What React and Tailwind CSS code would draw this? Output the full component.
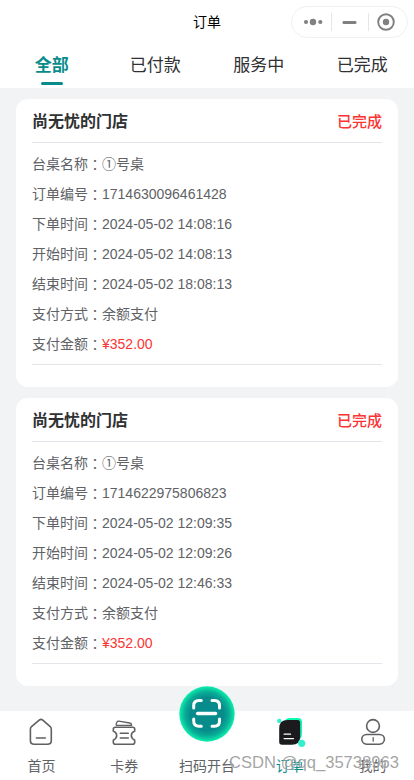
import React from "react";

const tabs = ["全部", "已付款", "服务中", "已完成"];

const orders = [
  { no: "1714630096461428", placed: "2024-05-02 14:08:16", start: "2024-05-02 14:08:13", end: "2024-05-02 18:08:13" },
  { no: "1714622975806823", placed: "2024-05-02 12:09:35", start: "2024-05-02 12:09:26", end: "2024-05-02 12:46:33" },
];

function Capsule() {
  return (
    <div className="absolute left-[291px] top-[6px] h-8 w-[117px] rounded-full border border-[#f0f0f0] bg-white">
      <svg className="absolute -left-px -top-px" width="117" height="32" viewBox="0 0 117 32">
        <g fill="#808080">
          <circle cx="15" cy="16" r="2.1" />
          <circle cx="22" cy="16" r="3.2" />
          <circle cx="29.3" cy="16" r="2.1" />
          <rect x="51.5" y="15" width="14" height="3" rx="1.3" />
          <circle cx="95" cy="16" r="3.2" />
        </g>
        <circle cx="95" cy="16" r="7.8" fill="none" stroke="#808080" strokeWidth="1.9" />
        <path d="M40.5 7v18M77.5 7v18" stroke="#e6e6e6" />
      </svg>
    </div>
  );
}

function Row({ label, value, red }) {
  return (
    <div className="flex h-[30px] items-center whitespace-nowrap text-sm text-[#606266]">
      <span>{label}</span>
      <span className="font-['Noto_Sans_CJK_TC',sans-serif]" lang="zh-TW">：</span>
      <span className={red ? "text-[#fa3534]" : ""}>{value}</span>
    </div>
  );
}

function Card({ order }) {
  return (
    <section className="h-[288px] rounded-xl bg-white px-4">
      <div className="flex h-11 items-center justify-between border-b border-[#e4e5ea] pt-[3px]">
        <h2 className="text-base font-bold text-[#303133]">尚无忧的门店</h2>
        <span className="text-[15px] font-medium text-[#fa3534]">已完成</span>
      </div>
      <div className="border-b border-[#e4e5ea] pb-[5px] pt-[6px]">
        <Row label="台桌名称" value="①号桌" />
        <Row label="订单编号" value={order.no} />
        <Row label="下单时间" value={order.placed} />
        <Row label="开始时间" value={order.start} />
        <Row label="结束时间" value={order.end} />
        <Row label="支付方式" value="余额支付" />
        <Row label="支付金额" value="¥352.00" red />
      </div>
    </section>
  );
}

const line = { fill: "none", stroke: "#606064", strokeWidth: 1.6, strokeLinecap: "round", strokeLinejoin: "round" };

function HomeIcon() {
  return (
    <svg width="32" height="32" viewBox="0 0 32 32" {...line}>
      <path d="M5.4 13.2Q5.4 11.7 6.5 10.7L14.2 4.2Q16 2.7 17.8 4.2L25.2 10.7Q26.3 11.7 26.3 13.2V24.4Q26.3 28.2 22.4 28.2H9.3Q5.4 28.2 5.4 24.4Z" />
      <path d="M11.4 22H20.3" />
    </svg>
  );
}

function TicketIcon() {
  return (
    <svg width="32" height="32" viewBox="0 0 32 32" {...line}>
      <path d="M7.3 11.2H24.7Q26.7 11.2 26.7 13.2V15Q23.3 16.5 23.3 19.5T26.7 24.2V26.2Q26.7 28.2 24.7 28.2H7.3Q5.3 28.2 5.3 26.2V24.2Q8.7 22.5 8.7 19.5T5.3 15V13.2Q5.3 11.2 7.3 11.2Z" />
      <path d="M12.3 17.2H20.3M12.3 22H20.3" />
      <path d="M8.2 8.2L9 6Q9.4 4.9 10.6 5.1L21.8 7Q23.7 7.5 23.7 9.3H9Q7.8 9.3 8.2 8.2Z" strokeWidth="1.3" />
    </svg>
  );
}

function OrderIcon() {
  return (
    <svg width="32" height="32" viewBox="0 0 32 32">
      <defs>
        <linearGradient id="mint" x1="0" y1="0" x2="0" y2="1">
          <stop offset="0" stopColor="#0bfbaf" />
          <stop offset="1" stopColor="#35edd0" />
        </linearGradient>
      </defs>
      <path d="M15 2H24Q28 2 28 6V18Q28 24 21 26H10V8Q11 2 15 2Z" fill="url(#mint)" />
      <circle cx="5.3" cy="4.9" r="2.2" fill="#35edcf" />
      <path d="M13.5 4H23.5Q26.2 4 26.2 6.7V20.5Q26.2 28.7 17.8 28.7H8Q5.2 28.7 5.2 26V12.3Q5.2 4 13.5 4Z" fill="#1b1b1d" />
      <path d="M10.1 18.2H16.5M10.1 22.6H19.5" stroke="#fff" strokeWidth="1.3" strokeLinecap="round" />
      <circle cx="27.7" cy="27.3" r="3.6" fill="#35edcf" />
    </svg>
  );
}

function UserIcon() {
  return (
    <svg width="32" height="32" viewBox="0 0 32 32" {...line}>
      <circle cx="16" cy="10" r="6.4" />
      <rect x="4.8" y="18.5" width="22.6" height="9.7" rx="4.85" />
      <path d="M16.2 21.7V25.2" strokeWidth="1.3" />
    </svg>
  );
}

function ScanIcon() {
  return (
    <svg width="56" height="56" viewBox="0 0 56 56" fill="none">
      <defs>
        <radialGradient id="scan">
          <stop offset="0" stopColor="#078b8b" />
          <stop offset=".6" stopColor="#078c8b" />
          <stop offset=".8" stopColor="#09ad96" />
          <stop offset="1" stopColor="#0cf0ad" />
        </radialGradient>
      </defs>
      <circle cx="28" cy="28" r="27.7" fill="url(#scan)" />
      <g stroke="#fff" strokeWidth="3" strokeLinecap="round">
        <path d="M14.7 22V19.7Q14.7 14.5 20 14.5H22.3M33 14.5H35.5Q40.5 14.5 40.5 19.7V22M40.5 33V35Q40.5 40.3 35.5 40.3H33M22.3 40.3H20Q14.7 40.3 14.7 35V33" />
        <path d="M18.7 27.5H36.5" strokeWidth="3.6" />
      </g>
    </svg>
  );
}

const nav = [
  { label: "首页", Icon: HomeIcon },
  { label: "卡券", Icon: TicketIcon },
  { label: "扫码开台", Icon: ScanIcon, raised: true },
  { label: "订单", Icon: OrderIcon, active: true },
  { label: "我的", Icon: UserIcon },
];

export default function App() {
  return (
    <div className="relative flex h-[780px] w-[414px] flex-col overflow-hidden bg-[#f2f3f5] font-['Liberation_Sans','Noto_Sans_CJK_SC',sans-serif]" lang="zh-CN">
      <header className="relative flex h-11 shrink-0 items-center justify-center bg-white text-sm text-black">
        <h1>订单</h1>
        <Capsule />
      </header>
      <div className="grid h-11 shrink-0 grid-cols-4 bg-white text-[17px] text-[#303133]">
        {tabs.map((tab, i) => (
          <div key={tab} className={`flex flex-col items-center ${i === 0 ? "font-bold text-[#078b8b]" : ""}`}>
            <span className="flex h-[38px] items-center pt-[6px]">{tab}</span>
            {i === 0 && <span className="h-[3px] w-[22px] rounded-full bg-[#078b8b]" />}
          </div>
        ))}
      </div>
      <main className="flex flex-1 flex-col gap-[11px] px-4 pt-[11px]">
        {orders.map((order) => (
          <Card key={order.no} order={order} />
        ))}
      </main>
      <nav className="grid h-[69px] shrink-0 grid-cols-5 bg-white text-sm text-[#606266]">
        {nav.map(({ label, Icon, active, raised }) => (
          <div key={label} className="flex flex-col items-center justify-between">
            <div className={raised ? "-mt-[25px] h-14" : "mt-[5px] h-8"}>
              <Icon />
            </div>
            <span className={`h-[26px] whitespace-nowrap leading-[24px] ${active ? "text-[#078b8b]" : ""}`}>{label}</span>
          </div>
        ))}
      </nav>
      <div className="absolute left-[229px] top-[753px] whitespace-nowrap text-[16.6px] leading-5 text-[#999999]/90 [text-shadow:1px_1px_0_rgba(255,255,255,0.5)]">
        CSDN @qq_35738963
      </div>
    </div>
  );
}
